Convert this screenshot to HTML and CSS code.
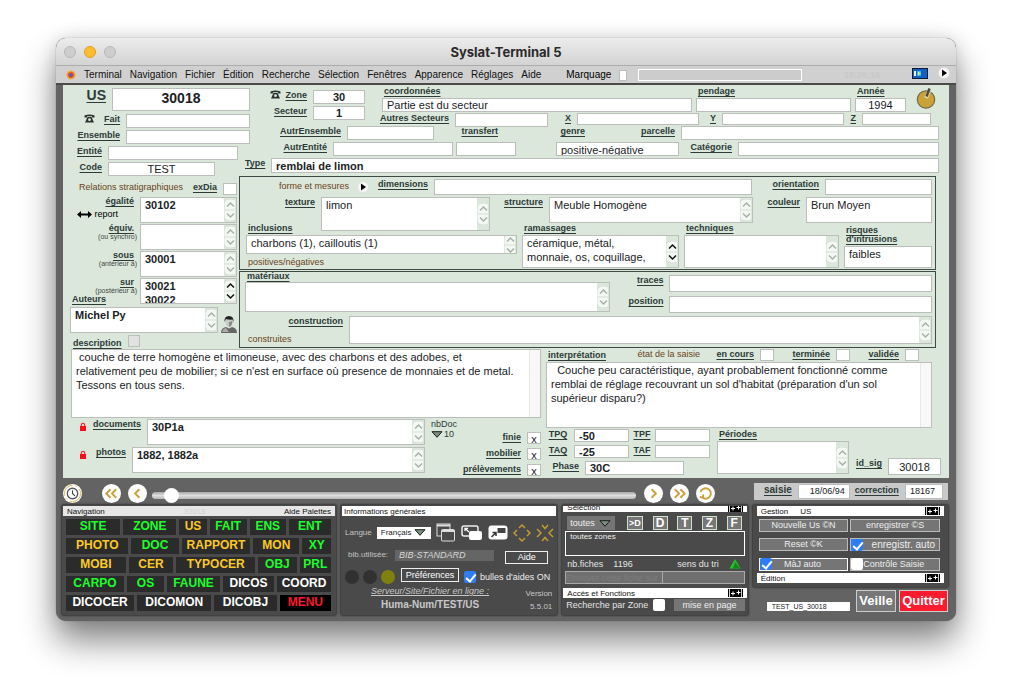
FILE: index.html
```html
<!DOCTYPE html>
<html lang="fr">
<head>
<meta charset="UTF-8">
<meta name="viewport" content="width=device-width, initial-scale=1.0">
<title>Syslat-Terminal 5</title>
<link rel="stylesheet" href="styles.css">
</head>
<body>

<!-- shared icons -->
<svg class="defs" width="0" height="0" aria-hidden="true">
  <symbol id="updown" viewBox="0 0 11 22">
    <rect x="0" y="0" width="13" height="22" rx="5" fill="#f4f8f4" stroke="#d2dcd2"/>
    <path d="M0 11H11" stroke="#d5ddd5"/>
    <path d="M3 7.500L6.500 4L10 7.500M3 14.500L6.500 18L10 14.500" fill="none" stroke="currentColor" stroke-width="1.500"/>
  </symbol>
  <symbol id="play" viewBox="0 0 12 12">
    <circle cx="6" cy="6" r="5.500" fill="#f6f6f6" stroke="#d8d8d8" stroke-width=".5"/>
    <path d="M4 2.500V9.500L9 6Z" fill="#000"/>
  </symbol>
  <symbol id="lock" viewBox="0 0 8 10">
    <path d="M2.300 5V3a1.700 1.700 0 0 1 3.400 0V5" fill="none" stroke="#e8303a" stroke-width="1.200"/>
    <rect x="1" y="4" width="6" height="5" fill="#fb0d1b"/>
  </symbol>
  <symbol id="phone" viewBox="0 0 11 9">
    <path d="M.5 3.500V1.500Q5.500-.5 10.500 1.500V3.500H8V2.200H3V3.500Z" fill="#2b3230"/>
    <path d="M3.500 3H7.500L10 8.500H1Z" fill="#2b3230"/>
    <circle cx="5.500" cy="5.700" r="1.400" fill="#dbe7db"/>
  </symbol>
  <symbol id="plus2" viewBox="0 0 15 8">
    <rect width="15" height="8" fill="#000"/>
    <path d="M1.500 0V8M13.500 0V8" stroke="#fff" stroke-width=".8"/>
    <path d="M3 4.500H7M5 2.500V6.500M8.500 3.500H12.500M10.500 1.500V5.500" stroke="#fff"/>
  </symbol>
  <symbol id="down" viewBox="0 0 12 7">
    <path d="M1 .7H11L6 6.300Z" fill="#7d8d80" stroke="#16201a"/>
  </symbol>
</svg>

<main class="window">
  <header class="titlebar">
    <div class="lights"><span></span><span class="min"></span><span></span></div>
    <h1>Syslat-Terminal 5</h1>
  </header>

  <nav class="menubar">
    <svg width="10" height="10" viewBox="0 0 10 10"><circle cx="5" cy="5" r="3.600" fill="#e0413c" stroke="#f5a11c" stroke-width="1.800" stroke-dasharray="2 .6"/><circle cx="5" cy="5" r="1.600" fill="#4963c9"/></svg>
    <button>Terminal</button>
    <button>Navigation</button>
    <button>Fichier</button>
    <button>Édition</button>
    <button>Recherche</button>
    <button>Sélection</button>
    <button>Fenêtres</button>
    <button>Apparence</button>
    <button>Réglages</button>
    <button>Aide</button>
    <label class="mark" for="marquage">Marquage</label>
    <input class="mark-box" type="checkbox" id="marquage">
    <input class="mark-text" type="text" aria-label="Message">
    <span class="clock">10:26:19</span>
    <svg class="screen" width="16" height="11" viewBox="0 0 16 11"><rect x=".5" y=".5" width="15" height="10" fill="#1360c4" stroke="#0c1c3a"/><rect x="2" y="3" width="2" height="5" fill="#e8f4ff"/><rect x="5" y="3" width="4" height="5" fill="#37b9e0"/><path d="M6 3.500L9 5.500L6 7.500Z" fill="#cde88a"/></svg>
    <svg width="12" height="12"><use href="#play"/></svg>
  </nav>

  <section class="form">

    <!-- identification -->
    <div class="head">
      <div class="ident">
        <div class="line us"><label for="us">US</label><input id="us" value="30018"></div>
        <div class="line fait">
          <div class="phone-label"><svg width="11" height="9"><use href="#phone"/></svg><label for="fait">Fait</label></div>
          <input id="fait">
        </div>
        <div class="line fait"><label for="ensemble">Ensemble</label><input id="ensemble"></div>
        <div class="line entite"><label for="entite">Entité</label><input id="entite"></div>
        <div class="line code"><label for="code">Code</label><input class="center" id="code" value="TEST"></div>
      </div>

      <div class="place">
        <div class="place-top">
          <div class="zones">
            <div class="line zone">
              <div class="phone-label"><svg width="11" height="9"><use href="#phone"/></svg><label for="zone">Zone</label></div>
              <input class="center bold" id="zone" value="30">
            </div>
            <div class="line zone"><label for="secteur">Secteur</label><input class="center bold" id="secteur" value="1"></div>
          </div>
          <div class="coords">
            <div class="line coord">
              <div class="stack"><label for="coord">coordonnées</label><input id="coord" value="Partie est du secteur"></div>
              <div class="stack"><label for="pendage">pendage</label><input id="pendage"></div>
              <div class="stack"><label for="annee">Année</label><input class="center" id="annee" value="1994"></div>
              <svg width="22" height="22" viewBox="0 0 22 22"><circle cx="11" cy="12.500" r="8.700" fill="#caa238" stroke="#6f6a50" stroke-width="1.200"/><path d="M14 4L11 11" stroke="#e3d9a8" stroke-width="4"/><path d="M14.500 1.500L11.500 9.500" stroke="#4d4b40" stroke-width="2.600"/></svg>
            </div>
            <div class="line xyz">
              <label for="autres">Autres Secteurs</label><input id="autres">
              <label for="cx">X</label><input id="cx">
              <label for="cy">Y</label><input id="cy">
              <label for="cz">Z</label><input id="cz">
            </div>
          </div>
        </div>
        <div class="line autr">
          <label for="autrens">AutrEnsemble</label><input id="autrens">
          <label for="transfert">transfert</label>
          <label for="genre">genre</label>
          <label for="parcelle">parcelle</label><input id="parcelle">
        </div>
        <div class="line autr2">
          <label for="autrent">AutrEntité</label>
          <div class="pair"><input id="autrent"><input id="transfert"></div>
          <select id="genre"><option>positive-négative</option></select>
          <label for="categorie">Catégorie</label><input id="categorie">
        </div>
      </div>

      <div class="line type"><label for="type">Type</label><input class="bold" id="type" value="remblai de limon"></div>
    </div>

    <!-- relations + formation -->
    <div class="middle">
      <div class="relations">
        <div class="rel-title"><span class="brown">Relations stratigraphiques</span><label for="exdia">exDia</label><input class="sq" type="checkbox" id="exdia"></div>
        <div class="rel">
          <div class="names"><label for="egalite">égalité</label>
            <span class="report"><svg width="15" height="7" viewBox="0 0 15 7"><path d="M0 3.500L4 0V2.500H11V0L15 3.500L11 7V4.500H4V7Z"/></svg>report</span></div>
          <div class="memo"><textarea class="bold" id="egalite">30102</textarea><button class="scroll" aria-label="Défiler"><svg><use href="#updown"/></svg></button></div>
        </div>
        <div class="rel">
          <div class="names"><label for="equiv">équiv.</label><small>(ou synchro)</small></div>
          <div class="memo"><textarea class="bold" id="equiv"></textarea><button class="scroll" aria-label="Défiler"><svg><use href="#updown"/></svg></button></div>
        </div>
        <div class="rel">
          <div class="names"><label for="sous">sous</label><small>(antérieur à)</small></div>
          <div class="memo"><textarea class="bold" id="sous">30001</textarea><button class="scroll" aria-label="Défiler"><svg><use href="#updown"/></svg></button></div>
        </div>
        <div class="rel">
          <div class="names"><label for="sur">sur</label><small>(postérieur à)</small><label class="auteurs" for="auteurs">Auteurs</label></div>
          <div class="memo"><textarea class="bold" id="sur">30021
30022</textarea><button class="scroll on" aria-label="Défiler"><svg><use href="#updown"/></svg></button></div>
        </div>
        <div class="author">
          <div class="memo"><textarea class="bold" id="auteurs">Michel Py</textarea><button class="scroll" aria-label="Défiler"><svg><use href="#updown"/></svg></button></div>
          <svg width="16" height="18" viewBox="0 0 16 18"><path d="M0 18Q0 13 5 12L8 13.500L11 12Q16 13 16 18Z" fill="#666"/><path d="M1 17Q2 13.500 5 13L8 17Z" fill="#aaa"/><ellipse cx="8" cy="7" rx="3.600" ry="5" fill="#c9c9c9"/><path d="M3.500 7Q3 1 8 1T12.500 7L11.500 4.500Q8 5 5 4Z" fill="#222"/><path d="M8 7Q11 7 11.500 5Q11.500 11 8 12Z" fill="#8a8a8a"/></svg>
        </div>
        <div class="desc-title"><label for="description">description</label><input class="sq grey" type="checkbox" aria-label="Verrouiller la description"></div>
      </div>

      <div class="boxes">
        <div class="box shape">
          <div class="line dims">
            <span class="brown">forme et mesures</span>
            <svg width="12" height="12"><use href="#play"/></svg>
            <label for="dimensions">dimensions</label><input id="dimensions">
            <label for="orientation">orientation</label><input id="orientation">
          </div>
          <div class="line texture">
            <label for="texture">texture</label>
            <div class="memo high"><textarea id="texture">limon</textarea><button class="scroll" aria-label="Défiler"><svg><use href="#updown"/></svg></button></div>
            <label for="structure">structure</label>
            <div class="memo"><textarea id="structure">Meuble Homogène</textarea><button class="scroll" aria-label="Défiler"><svg><use href="#updown"/></svg></button></div>
            <label for="couleur">couleur</label>
            <div class="memo"><textarea id="couleur">Brun Moyen</textarea></div>
          </div>
          <div class="line content">
            <div class="stack short"><label for="inclusions">inclusions</label>
              <div class="memo"><textarea id="inclusions">charbons (1), cailloutis (1)</textarea><button class="scroll" aria-label="Défiler"><svg><use href="#updown"/></svg></button></div>
              <span class="brown">positives/négatives</span></div>
            <div class="stack"><label for="ramassages">ramassages</label>
              <div class="memo"><textarea id="ramassages">céramique, métal,
monnaie, os, coquillage,</textarea><button class="scroll on" aria-label="Défiler"><svg><use href="#updown"/></svg></button></div></div>
            <div class="stack"><label for="techniques">techniques</label>
              <div class="memo"><textarea id="techniques"></textarea><button class="scroll" aria-label="Défiler"><svg><use href="#updown"/></svg></button></div></div>
            <div class="stack risks"><label for="risques">risques<br>d'intrusions</label>
              <div class="memo"><textarea id="risques">faibles</textarea></div></div>
          </div>
        </div>

        <div class="box built">
          <div class="line materials">
            <div class="stack"><label for="materiaux">matériaux</label>
              <div class="memo"><textarea id="materiaux"></textarea><button class="scroll" aria-label="Défiler"><svg><use href="#updown"/></svg></button></div></div>
            <div class="traces">
              <label for="traces">traces</label><input id="traces">
              <label for="position">position</label><input id="position">
            </div>
          </div>
          <div class="line construction">
            <div class="names"><label for="construction">construction</label><span class="brown">construites</span></div>
            <div class="memo"><textarea id="construction"></textarea><button class="scroll" aria-label="Défiler"><svg><use href="#updown"/></svg></button></div>
          </div>
        </div>
      </div>
    </div>

    <!-- texts, documents, dating -->
    <div class="lower">
      <div class="lower-left">
        <div class="memo text"><textarea id="description"> couche de terre homogène et limoneuse, avec des charbons et des adobes, et
relativement peu de mobilier; si ce n'est en surface où presence de monnaies et de metal.
Tessons en tous sens.</textarea><span class="bar"></span></div>
        <div class="docs">
          <div class="doc-rows">
            <div class="line documents">
              <svg width="8" height="10"><use href="#lock"/></svg><label for="documents">documents</label>
              <div class="memo"><textarea class="bold" id="documents">30P1a</textarea><button class="scroll" aria-label="Défiler"><svg><use href="#updown"/></svg></button></div>
            </div>
            <div class="line photos">
              <svg width="8" height="10"><use href="#lock"/></svg><label for="photos">photos</label>
              <div class="memo"><textarea class="bold" id="photos">1882, 1882a</textarea><button class="scroll" aria-label="Défiler"><svg><use href="#updown"/></svg></button></div>
            </div>
          </div>
          <div class="nbdoc">nbDoc<span><svg width="12" height="7"><use href="#down"/></svg>10</span></div>
          <div class="flags">
            <label for="finie">finie</label><input id="finie" value="x">
            <label for="mobilier">mobilier</label><input id="mobilier" value="x">
            <label for="prelevements">prélèvements</label><input id="prelevements" value="x">
          </div>
        </div>
      </div>

      <div class="lower-right">
        <div class="line states">
          <label for="interp">interprétation</label>
          <span class="brown">état de la saisie</span>
          <label for="encours">en cours</label><input class="sq" type="checkbox" id="encours">
          <label for="terminee">terminée</label><input class="sq" type="checkbox" id="terminee">
          <label for="validee">validée</label><input class="sq" type="checkbox" id="validee">
        </div>
        <div class="memo text"><textarea id="interp">  Couche peu caractéristique, ayant probablement fonctionné comme
remblai de réglage recouvrant un sol d'habitat (préparation d'un sol
supérieur disparu?)</textarea><span class="bar"></span></div>
        <div class="dating">
          <div>
            <div class="dates">
              <label for="tpq">TPQ</label><input class="bold" id="tpq" value="-50">
              <label for="tpf">TPF</label><input id="tpf">
              <label for="taq">TAQ</label><input class="bold" id="taq" value="-25">
              <label for="taf">TAF</label><input id="taf">
            </div>
            <div class="line phase"><label for="phase">Phase</label><input class="bold" id="phase" value="30C"></div>
          </div>
          <div class="stack periods"><label for="periodes">Périodes</label>
            <div class="memo"><textarea id="periodes"></textarea><button class="scroll" aria-label="Défiler"><svg><use href="#updown"/></svg></button></div></div>
          <div class="line sig"><label for="idsig">id_sig</label><input class="center" id="idsig" value="30018"></div>
        </div>
      </div>
    </div>
  </section>

  <!-- record browser -->
  <div class="browser">
    <button class="round clock-btn" aria-label="Historique"><svg viewBox="0 0 20 20"><circle cx="10" cy="10" r="8.500" fill="none" stroke="#d8b24a" stroke-width="1" stroke-dasharray="16 3 2 3"/><circle cx="10" cy="10" r="5.500" fill="#fff" stroke="#555a66" stroke-width="1.400"/><path d="M10 6.500V10L12.500 12.500" fill="none" stroke="#444" stroke-width="1.200"/></svg></button>
    <button class="round" aria-label="Premier"><svg viewBox="0 0 20 20"><path d="M9 5.500L4.500 10L9 14.500M15 5.500L10.500 10L15 14.500"/></svg></button>
    <button class="round" aria-label="Précédent"><svg viewBox="0 0 20 20"><path d="M12 5.500L7.500 10L12 14.500"/></svg></button>
    <input type="range" min="0" max="1000" value="25" aria-label="Fiche">
    <button class="round" aria-label="Suivant"><svg viewBox="0 0 20 20"><path d="M8 5.500L12.500 10L8 14.500"/></svg></button>
    <button class="round" aria-label="Dernier"><svg viewBox="0 0 20 20"><path d="M5 5.500L9.500 10L5 14.500M11 5.500L15.500 10L11 14.500"/></svg></button>
    <button class="round" aria-label="Recharger"><svg viewBox="0 0 20 20"><path d="M7 14.500A5.500 5.500 0 1 0 4.800 8.500M4 13.500L7.500 14.500L7.500 11"/></svg></button>
    <div class="entry">
      <label class="big" for="saisie">saisie</label><input class="date" id="saisie" value="18/06/94">
      <label for="correction">correction</label><input id="correction" value="18167">
    </div>
  </div>

  <div class="palettes">
    <section class="palette nav">
      <header class="pale"><span>Navigation</span><span class="ghost">30018</span><span>Aide Palettes</span></header>
      <div class="keys k1"><button>SITE</button><button>ZONE</button><button class="y">US</button><button>FAIT</button><button>ENS</button><button>ENT</button></div>
      <div class="keys k2"><button class="y">PHOTO</button><button>DOC</button><button class="y">RAPPORT</button><button class="y">MON</button><button>XY</button></div>
      <div class="keys k3"><button class="y">MOBI</button><button class="y">CER</button><button class="y">TYPOCER</button><button>OBJ</button><button>PRL</button></div>
      <div class="keys k4"><button>CARPO</button><button>OS</button><button>FAUNE</button><button class="w">DICOS</button><button class="w">COORD</button></div>
      <div class="keys k5"><button class="w">DICOCER</button><button class="w">DICOMON</button><button class="w">DICOBJ</button><button class="menu">MENU</button></div>
    </section>

    <section class="palette info">
      <header><span>Informations générales</span></header>
      <div class="lang">
        <label for="langue">Langue</label>
        <span class="drop"><select id="langue"><option>Français</option></select><svg width="12" height="7"><use href="#down"/></svg></span>
        <svg width="20" height="19" viewBox="0 0 20 19" fill="#4a4a4a" stroke="#ddd"><rect x="1" y="1" width="13" height="12"/><path d="M1 2.500H14" stroke-width="2"/><rect x="5.500" y="6.500" width="13" height="11.500" rx="1"/><path d="M5.500 8H18.500" stroke-width="2"/></svg>
        <svg width="22" height="16" viewBox="0 0 22 16"><rect x="1" y="1" width="16" height="10" rx="2" fill="#4a4a4a" stroke="#eee" stroke-width="1.500"/><rect x="8" y="6" width="13" height="9" rx="2" fill="#fff"/><path d="M8 7L4 3.500M4 6V3.500H7" fill="none" stroke="#fff" stroke-width="1.300"/></svg>
        <svg width="20" height="15" viewBox="0 0 20 15"><rect x=".5" y=".5" width="19" height="14" rx="3" fill="#fff"/><rect x="9.500" y="3" width="8" height="5" fill="#444"/><path d="M3.500 12L8 7.500M4.500 7.500H8V11" fill="none" stroke="#333" stroke-width="1.500"/></svg>
        <svg width="18" height="18" viewBox="0 0 18 18" fill="none" stroke="#c39a35" stroke-width="1.500"><path d="M6 4L9 1L12 4M6 14L9 17L12 14M4 6L1 9L4 12M14 6L17 9L14 12"/></svg>
        <svg width="18" height="18" viewBox="0 0 18 18" fill="none" stroke="#c39a35" stroke-width="1.500"><path d="M6 1L9 4.500L12 1M6 17L9 13.500L12 17M1 5L5 9L1 13M17 5L13 9L17 13"/></svg>
      </div>
      <div class="lib"><label for="bib">bib.utilisée:</label><input id="bib" value="BIB-STANDARD"><button class="outline">Aide</button></div>
      <div class="prefs"><i></i><i></i><i class="olive"></i><button class="outline pref">Préférences</button><input class="tick" type="checkbox" id="bulles" checked><label for="bulles">bulles d'aides ON</label></div>
      <div class="server"><div><a href="#">Serveur/Site/Fichier en ligne :</a><strong>Huma-Num/TEST/US</strong></div><div class="version"><span>Version</span><span>5.5.01</span></div></div>
    </section>

    <section class="palette select">
      <header class="cut"><span>Sélection</span><svg width="15" height="8"><use href="#plus2"/></svg></header>
      <div class="tools">
        <span class="drop dark"><select aria-label="Sélection"><option>toutes</option></select><svg width="12" height="7"><use href="#down"/></svg></span>
        <button class="small">&gt;D</button><button>D</button><button>T</button><button>Z</button><button>F</button>
      </div>
      <textarea class="zones-text" aria-label="Zones">toutes zones</textarea>
      <div class="count"><span>nb.fiches</span><span>1196</span><span class="sort">sens du tri</span><svg width="12" height="10" viewBox="0 0 12 10"><path d="M6 0L11.500 9.500H.5Z" fill="#25c428"/><path d="M6 3L11 9.500H4Z" fill="#128a1a"/></svg></div>
      <div class="send"><button>Envoyer cette fiche sur</button><button aria-label="Destination"></button></div>
      <header><span>Accès et Fonctions</span><svg width="15" height="8"><use href="#plus2"/></svg></header>
      <div class="access"><label for="parzone">Recherche par Zone</label><input class="tick" type="checkbox" id="parzone"><button>mise en page</button></div>
    </section>

    <div class="last">
      <section class="palette manage">
        <header><span class="gap">Gestion</span><span>US</span><svg width="15" height="8"><use href="#plus2"/></svg></header>
        <div class="actions">
          <button>Nouvelle Us ©N</button>
          <button>enregistrer ©S</button>
          <button>Reset ©K</button>
          <div class="opt"><input class="tick" type="checkbox" id="auto" checked><label class="large" for="auto">enregistr. auto</label></div>
          <div class="opt lit"><input class="tick" type="checkbox" id="maj" checked><label for="maj">MàJ auto</label></div>
          <div class="opt"><input class="tick" type="checkbox" id="controle"><label class="near" for="controle">Contrôle Saisie</label></div>
        </div>
        <header><span>Édition</span><svg width="15" height="8"><use href="#plus2"/></svg></header>
      </section>
      <div class="exit"><input aria-label="Nom de la fiche" value="TEST_US_30018"><button>Veille</button><button class="quit">Quitter</button></div>
    </div>
  </div>
</main>

</body>
</html>
```

FILE: styles.css
```css
:root{
  --green:#dbe7db;
  --ink:#2c3a38;
  --line:#bbbebb;
  --dark:#636363;
  --panel:#4a4a4a;
}
*{box-sizing:border-box;}
body{
  margin:0;padding:38px 56px 74px;
  background:#fff;
  font:11px/14px "Liberation Sans",Arial,sans-serif;
}
.defs{position:absolute;}
svg{display:block;flex:none;}
input,select,textarea,button{
  font:inherit;color:#1a231f;margin:0;min-width:0;border-radius:0;outline:0;
}
button{border:0;padding:0;background:none;cursor:pointer;white-space:nowrap;}
label{white-space:nowrap;}

/* window */
.window{
  background:var(--dark);border-radius:10px;
  box-shadow:0 0 1px rgba(0,0,0,.5),0 20px 34px rgba(0,0,0,.48),0 0 18px rgba(0,0,0,.12);
  padding-bottom:6px;
}
.titlebar{
  position:relative;height:28px;display:flex;align-items:center;justify-content:center;
  background:linear-gradient(#ececec,#d3d3d3);border-bottom:1px solid #acacac;
  border-radius:10px 10px 0 0;
}
.titlebar h1{margin:0;font:700 13px/16px Inter,sans-serif;color:#2a2a2a;}
.lights{position:absolute;left:8px;top:8px;display:flex;gap:8px;}
.lights span{width:12px;height:12px;border-radius:50%;background:#cecece;border:1px solid #b8b8b8;}
.lights .min{background:#fdbb2f;border-color:#dfa023;}
.menubar{
  height:19px;display:flex;align-items:center;gap:8px;padding:1px 6px 0 10px;
  background:#d0d0d0;border-bottom:2px solid #4a4a4a;font-size:10px;
}
.menubar button{color:#111;}
.mark{margin-left:17px;}
.mark-box{appearance:none;width:8px;height:11px;background:#fff;border:1px solid #bbb;}
.mark-text{width:164px;height:12px;margin-left:3px;background:#ccc;border:1px solid #fff;}
.clock{margin-left:auto;color:#c8c8c8;font-weight:bold;font-size:9px;}
.screen{margin:0 2px 4px 24px;}
.menubar > svg:last-child{margin-bottom:4px;}

/* form basics */
.form{margin:0 7px;background:var(--green);height:393px;}
.form label{
  font-weight:bold;font-size:9px;line-height:10px;color:var(--ink);
  text-decoration:underline;text-underline-offset:2px;text-align:right;
}
.form input,.form select,.memo{
  width:100%;height:14px;background:#fff;border:1px solid var(--line);padding:0 4px;
}
.form select{appearance:none;}
.form input.center{text-align:center;}
.form .bold{font-weight:bold;}
.line{display:grid;column-gap:6px;align-items:start;}
.brown{font-size:9px;line-height:10px;color:#6a4318;white-space:nowrap;}
.form input.sq{appearance:none;width:14px;height:12px;padding:0;}
.form input.grey{background:#e0e2e0;width:12px;}

.memo{display:flex;height:26px;padding:0;}
.memo textarea{
  flex:1;width:0;height:100%;border:0;padding:0 4px;resize:none;overflow:hidden;
  background:#fff;line-height:14px;
}
.scroll{width:12px;background:var(--green);display:flex;align-items:center;overflow:hidden;color:#a8b0a8;}
.scroll.on{color:#111;}
.scroll svg{width:11px;height:22px;}
.bar{width:11px;background:#f8f8f8;border-left:1px solid #e8e8e8;}
.stack{display:flex;flex-direction:column;min-width:0;}
.form .stack label{text-align:left;padding-left:2px;height:12px;}

/* identification */
.head{display:grid;grid-template-columns:182px 5px 1fr;grid-template-rows:73px 18px;}
.ident{grid-area:1/1/3/3;display:flex;flex-direction:column;gap:2px;padding-top:3px;}
.us{grid-template-columns:43px 138px;margin-bottom:1px;}
.form .us label{font-size:14px;line-height:14px;}
.form .us input{height:23px;font-size:14px;font-weight:bold;text-align:center;padding-bottom:4px;}
.fait{grid-template-columns:57px 124px;}
.entite{grid-template-columns:39px 130px;}
.code{grid-template-columns:39px 107px;}
.phone-label{display:flex;justify-content:flex-end;gap:9px;}
.zone .phone-label{gap:5px;}
.place{grid-area:1/3/2/4;padding-top:1px;}
.place-top{display:flex;gap:15px;height:40px;}
.zones{width:115px;display:flex;flex-direction:column;gap:2px;padding-top:4px;}
.zone{grid-template-columns:57px 52px;}
.coords{flex:1;min-width:0;}
.coord{grid-template-columns:310fr 155fr 51fr 31px;column-gap:4px;padding:0 8px 0 2px;}
.coord > svg{justify-self:center;margin-top:1px;}
.xyz{grid-template-columns:69px 93fr 17px 122fr 11px 122fr 6px 69fr;padding-right:18px;margin-top:1px;}
.xyz input{height:12px;}
.form .xyz #autres{height:14px;}
.autr{grid-template-columns:91px 87px 58px 81px 84px 1fr;padding-right:10px;height:16px;}
.autr2{grid-template-columns:77px 183px 157px 47px 1fr;padding-right:10px;}
.autr2 select{justify-self:end;width:123px;}
.pair{display:grid;grid-template-columns:2fr 1fr;gap:3px;}
.type{grid-area:2/2/3/4;grid-template-columns:20px 1fr;padding-right:10px;}
.form .type input{height:15px;}

/* relations */
.middle{display:grid;grid-template-columns:176px 1fr;padding-right:13px;}
.rel-title{display:flex;justify-content:flex-end;gap:6px;height:21px;padding:6px 2px 0 0;}
.rel-title .brown{margin-right:4px;}
.rel-title .sq{margin-top:1px;}
.rel{display:grid;grid-template-columns:74px 97px;gap:3px;height:27px;}
.names{display:flex;flex-direction:column;}
.names label{padding-right:3px;}
.form .rel label{line-height:9px;}
.rel small{font-size:7px;line-height:8px;text-align:right;color:#3f4845;}
.report{display:flex;align-items:center;justify-content:flex-end;gap:2px;padding-right:19px;font-size:9px;line-height:16px;}
.form .auteurs{align-self:flex-start;padding-left:9px;}
.author{display:flex;align-items:flex-end;gap:3px;padding:2px 0 0 7px;}
.author .memo{width:148px;}
.desc-title{display:flex;gap:6px;padding:2px 0 0 10px;}
.desc-title label{padding-top:3px;}

/* framed boxes */
.box{border:1px solid #3f4a45;padding:2px 3px 0 0;}
.shape{height:94px;margin-bottom:1px;}
.built{height:77px;}
.dims{grid-template-columns:109px 13px 54px 318fr 61px 107fr;}
.dims .brown{text-align:right;padding-top:2px;}
.dims > svg{margin:2px 0 0 2px;}
.form .dims input{height:16px;}
.texture{grid-template-columns:75px 169fr 47px 204fr 41px 126fr;margin-top:2px;height:26px;}
.texture .high{height:34px;}
.content{grid-template-columns:271fr 157fr 155fr 88fr;column-gap:5px;padding-left:6px;}
.content .memo{height:33px;}
.content .short .memo{height:19px;}
.short .brown{padding:3px 0 0 2px;}
.form .content .risks label{height:20px;margin:3px 0 0;line-height:9px;}
.content .risks .memo{height:22px;}
.built{padding-top:0;}
.materials{grid-template-columns:366fr 316fr;padding-left:5px;}
.form .materials .stack label{height:10px;line-height:8px;}
.materials .memo{height:30px;}
.traces{display:grid;grid-template-columns:47px 1fr;column-gap:6px;row-gap:4px;padding-top:3px;}
.form .traces input{height:17px;}
.construction{grid-template-columns:103px 1fr;margin-top:3px;}
.construction .memo{height:28px;}
.construction .names{height:28px;justify-content:space-between;padding-left:8px;}
.construction .names label{padding:0;}

/* lower part */
.lower{display:grid;grid-template-columns:470fr 395fr;gap:5px;padding:1px 8px 0;}
.lower-left,.lower-right{min-width:0;}
.memo.text{height:69px;}
.docs{display:grid;grid-template-columns:1fr 26px 78px;column-gap:6px;margin-top:1px;}
.doc-rows{display:flex;flex-direction:column;gap:2px;}
.documents{grid-template-columns:16px 48px 1fr;}
.photos{grid-template-columns:16px 33px 1fr;}
.doc-rows svg:not(.scroll svg){margin:3px 0 0 8px;}
.nbdoc{font-size:9px;line-height:10px;color:var(--ink);}
.nbdoc span{display:flex;align-items:center;gap:1px;}
.flags{display:grid;grid-template-columns:58px 14px;column-gap:6px;row-gap:4px;padding-top:13px;}
.form .flags input{height:12px;padding:1px 0 0;text-align:center;}
.lower-right{padding-right:9px;}
.states{grid-template-columns:60px 88px 48px 14px 50px 14px 43px 14px;height:13px;}
.form .states label:first-child{margin-top:1px;}
.states .brown{text-align:right;}
.lower-right .memo.text{height:66px;}
.dating{display:flex;gap:7px;margin:1px -9px 0 0;}
.dates{display:grid;grid-template-columns:24px 55px 18px 55px;column-gap:4px;row-gap:3px;}
.form .dates input{height:13px;}
.form .dates label{text-align:center;}
.phase{grid-template-columns:33px 99px;margin-top:3px;}
.periods{width:132px;}
.periods .memo{height:33px;}
.sig{grid-template-columns:26px 53px;align-self:end;}
.form .sig input{height:17px;}

/* record browser */
.browser{display:flex;align-items:center;height:27px;gap:7px;padding:3px 8px 0 7px;}
.round{width:19px;height:19px;border-radius:50%;background:#fff;}
.round svg{width:100%;height:100%;fill:none;stroke:#caa03c;stroke-width:2;}
.clock-btn{margin-right:13px;}
.browser input[type="range"]{
  flex:1;appearance:none;height:7px;border-radius:4px;margin:4px 1px 0 -2px;
  background:linear-gradient(#a8a8a8,#dedede 50%,#b8b8b8);
}
input[type="range"]::-webkit-slider-thumb{
  appearance:none;width:15px;height:15px;border-radius:50%;background:#fff;
}
.entry{
  display:flex;align-items:center;height:17px;width:194px;margin:0 0 4px 32px;
  background:#c9c9c9;padding:0 5px 0 10px;font-size:9px;
}
.entry label{font-weight:bold;color:var(--ink);line-height:10px;text-decoration:underline;text-underline-offset:2px;margin-bottom:3px;}
.entry .big{font-size:10px;}
.entry input{height:15px;width:38px;border:1px solid var(--line);background:#fff;padding:0 4px;}
.entry .date{width:52px;margin:0 5px 0 6px;text-align:right;}
.entry input:last-child{margin-left:auto;}

/* palettes */
.palettes{
  display:grid;grid-template-columns:275fr 217fr 186fr 196fr;gap:5px;
  padding:0 8px 0 6px;color:#e4e4e4;font-size:9px;line-height:10px;align-items:start;
}
.palette{
  background:var(--panel);height:110px;padding:1px 1px 0;min-width:0;
  box-shadow:0 0 2px 1px rgba(0,0,0,.45);border-radius:2px;
}
.palette header{
  display:flex;justify-content:space-between;align-items:center;height:10px;
  background:#fff;color:#111;font-size:8px;line-height:9px;padding:0 4px;
}
.palette header svg:last-child{margin-left:auto;}
.palette .pale{background:#e6e6e6;}
.ghost{color:#d2d2d2;}
.keys{display:grid;gap:3px;padding:0 4px 0 3px;margin-top:3px;}
.keys button{height:16px;background:#2b2b2b;color:#1dff2a;font-weight:bold;font-size:12px;line-height:14px;padding-bottom:2px;}
.keys .y{color:#fbc926;}
.keys .w{color:#fff;}
.keys .menu{background:#000;color:#fb1a2a;}
.k1{grid-template-columns:54fr 53fr 27fr 37fr 36fr 42fr;}
.k2{grid-template-columns:61fr 46fr 67fr 45fr 28fr;}
.k3{grid-template-columns:59fr 44fr 78fr 38fr 31fr;}
.k4{grid-template-columns:58fr 37fr 53fr 51fr 54fr;}
.k5{grid-template-columns:69fr 75fr 63fr 52fr;}

.info header{padding:0 2px;}
.lang{display:flex;align-items:center;gap:5px;padding:7px 2px 0 3px;font-size:8px;}
.lang label,.lib label{color:#c4c4c4;}
.drop{display:flex;align-items:center;width:56px;height:12px;background:#fff;padding:0 5px 0 4px;color:#111;}
.drop select{appearance:none;flex:1;width:0;border:0;padding:0;background:none;}
.lib{display:flex;align-items:center;gap:7px;padding:4px 8px 0 6px;font-size:8px;}
.lib input{flex:1;width:0;height:11px;border:0;background:#656565;color:#d6d6d6;font-size:9px;font-style:italic;padding:0 4px;}
.outline{border:1px solid #eee;color:#fff;font-size:9px;line-height:11px;height:13px;}
.lib .outline{width:43px;margin:5px 0 0 4px;}
.prefs{display:flex;align-items:center;gap:4px;padding:4px 3px 0;color:#eee;}
.prefs i{width:14px;height:14px;border-radius:50%;background:#313131;}
.prefs .olive{background:#80800f;}
.prefs .pref{width:58px;height:14px;margin:0 1px 3px 2px;}
.tick{appearance:none;width:12px;height:12px;border-radius:2px;background:#fff;flex:none;position:relative;}
.tick:checked{background:#2f7df6;}
.tick:checked::after{
  content:"";position:absolute;left:4px;top:1px;width:4px;height:8px;
  border:solid #fff;border-width:0 2px 2px 0;transform:rotate(40deg);
}
.server{display:flex;justify-content:space-between;padding:1px 4px 0 29px;color:#c8c8c8;}
.server > div{display:flex;flex-direction:column;align-items:center;gap:4px;}
.server a{color:#c8c8c8;font-style:italic;}
.server strong{font-size:10px;}
.server .version{font-size:8px;align-items:flex-end;gap:3px;padding-top:3px;}

.palette .cut{height:6px;overflow:hidden;align-items:flex-end;}
.tools{display:flex;align-items:center;justify-content:space-between;padding:4px 5px 1px 4px;}
.tools .drop{width:48px;height:14px;margin-right:2px;padding:0 4px 0 3px;}
.drop.dark{background:#757575;}
.drop.dark select{color:#eee;}
.tools button{width:15px;height:14px;border:1px solid #cfe0cf;background:#777;color:#fff;font-weight:bold;font-size:12px;line-height:12px;}
.tools .small{font-size:9px;width:16px;}
.zones-text{
  display:block;width:calc(100% - 4px);margin-left:2px;height:25px;border:1px solid #fff;
  background:none;color:#eee;font-size:8px;line-height:9px;padding:0 4px;resize:none;
}
.count{display:flex;align-items:center;gap:10px;height:15px;padding:0 6px 0 4px;}
.sort{margin-left:auto;}
.send{display:grid;grid-template-columns:97fr 82fr;margin:0 2px 4px;}
.send button{height:13px;border:1px solid #aaa;background:#6f6f6f;color:#7c7c7c;line-height:10px;text-align:left;overflow:hidden;}
.send button + button{border-left:0;}
.access{display:flex;align-items:center;gap:5px;padding:1px 2px 0 3px;}
.access button{flex:1;height:12px;background:#757575;color:#eee;margin-left:4px;}

.last{min-width:0;}
.manage{height:82px;padding:1px 4px 0;}
.manage .gap{margin-right:12px;}
.actions{display:grid;grid-template-columns:1fr 1fr;gap:4px 2px;padding:3px 4px 0 2px;height:57px;}
.actions button,.opt{height:13px;border:1px solid #bbb;background:#757575;color:#eee;line-height:10px;}
.actions button{padding-bottom:2px;}
.opt{display:flex;align-items:center;}
.opt.lit{border-color:#fff;}
.opt label{flex:1;text-align:center;padding-right:14px;}
.opt .near{padding:0;text-align:left;}
.opt .large{font-size:10px;text-align:right;padding-right:4px;}
.exit{display:flex;gap:3px;align-items:flex-end;padding-top:3px;}
.exit input{flex:1;width:0;height:9px;margin:0 3px 1px 14px;border:0;background:#fff;font-size:7px;line-height:9px;padding:0 5px;}
.exit button{width:40px;height:22px;border:1px solid #ccc;background:#777;color:#fff;font-weight:bold;font-size:13px;line-height:18px;}
.exit .quit{width:49px;background:#fb1a2e;}
```
